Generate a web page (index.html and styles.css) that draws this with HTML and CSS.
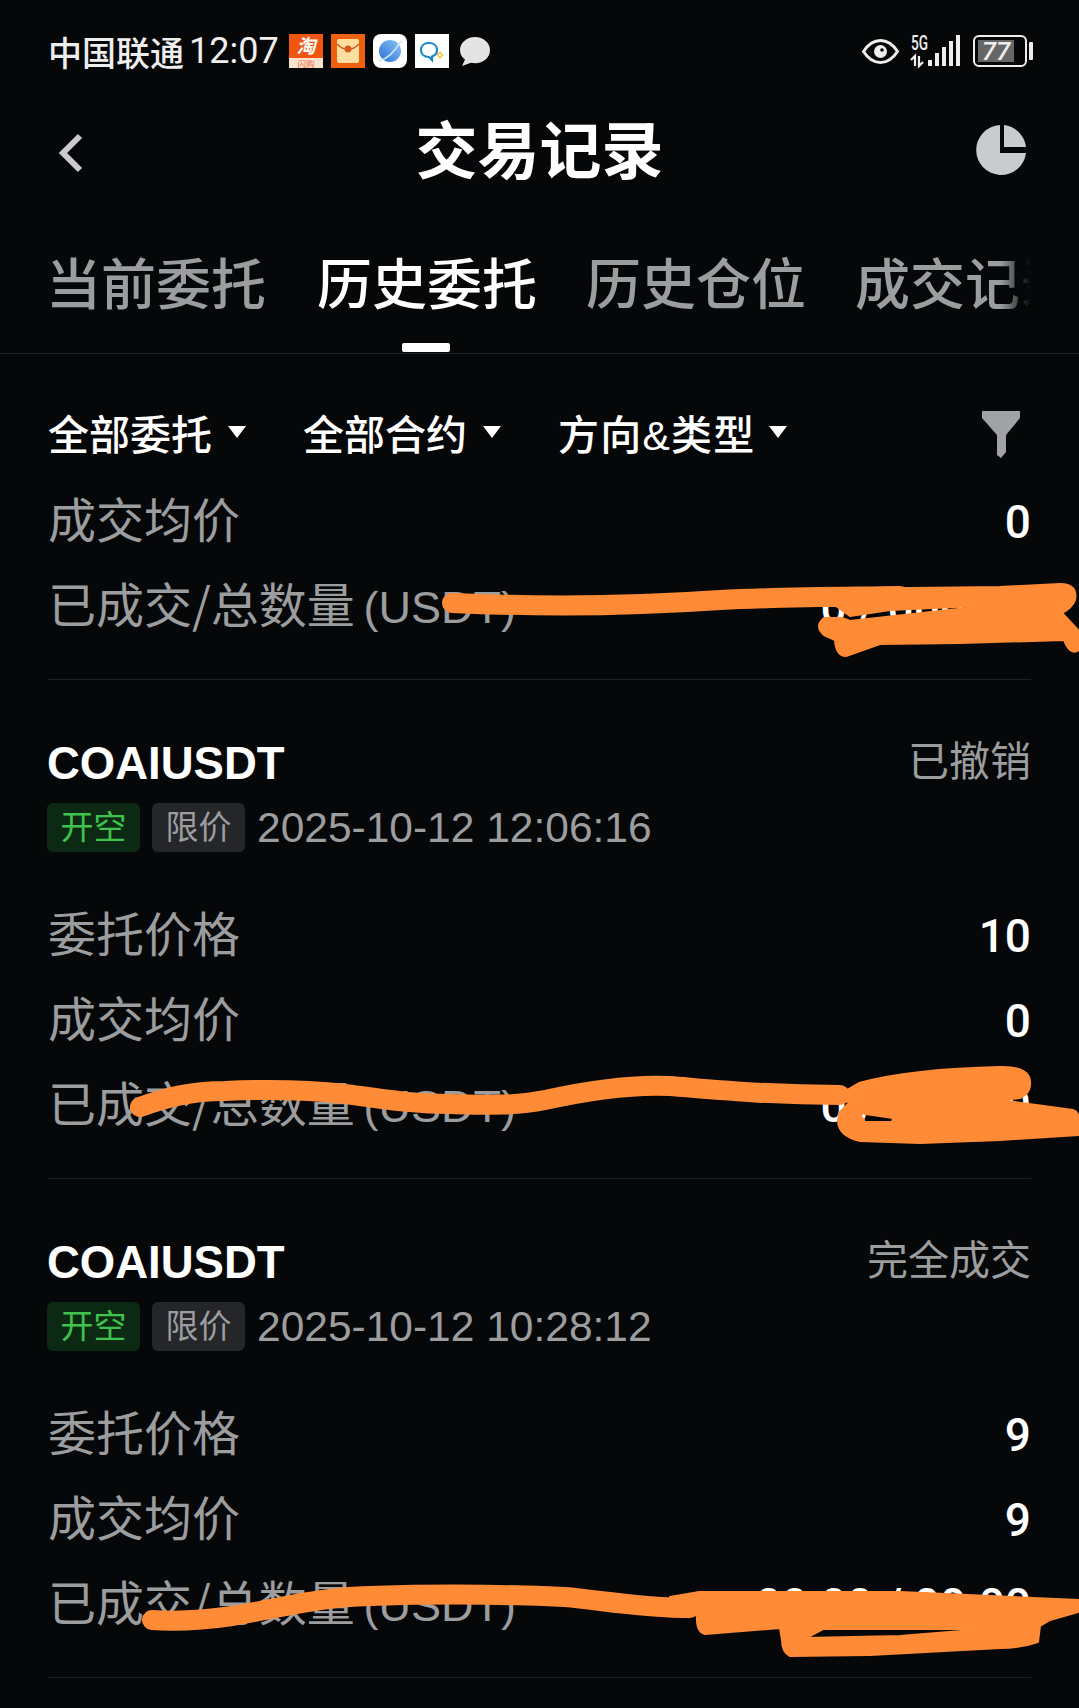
FILE: index.html
```html
<!DOCTYPE html>
<html>
<head>
    <title>交易记录</title>
    <meta charset="utf-8">
    <meta name="viewport" content="width=device-width, initial-scale=1.0">
    <link rel="stylesheet" href="styles.css">
</head>
<body>
    <div id="page">
        <!-- status bar -->
        <div class="statusbar">
            <div class="status-left">
                <span class="carrier">中国联通</span>
                <span class="clock">12:07</span>
                <svg class="app-icon" viewBox="0 0 34 34">
                    <rect width="34" height="34" fill="#f0560f"/>
                    <rect y="24" width="34" height="10" fill="#fbe2cf"/>
                    <text x="17" y="19" class="icon-tao">淘</text>
                    <text x="17" y="32.5" class="icon-shan">闪购</text>
                </svg>
                <svg class="app-icon" viewBox="0 0 34 34">
                    <rect width="34" height="34" fill="#ee620f"/>
                    <rect x="6" y="5" width="22" height="24" rx="2" fill="#ffdf9f"/>
                    <path d="M6 10 Q17 21 28 10" fill="none" stroke="#d9571b" stroke-width="1.500"/>
                    <circle cx="17" cy="15" r="3.500" fill="#d9571b"/>
                </svg>
                <svg class="app-icon" viewBox="0 0 34 34">
                    <defs>
                        <linearGradient id="globe" x1="0" y1="1" x2="1" y2="0">
                            <stop offset="0" stop-color="#2a6fd8"/>
                            <stop offset="1" stop-color="#8cc6f5"/>
                        </linearGradient>
                    </defs>
                    <rect width="34" height="34" rx="8" fill="#fff"/>
                    <circle cx="17" cy="17" r="11" fill="url(#globe)"/>
                    <path d="M6 27 Q18 24 28 7" fill="none" stroke="#cfe6fa" stroke-width="1.600"/>
                </svg>
                <svg class="app-icon" viewBox="0 0 34 34">
                    <rect width="34" height="34" fill="#fff"/>
                    <path d="M14 9 C9 9 6 12 6 16 C6 20 9 23 14 23 L17 26 V22.500 C20 21.500 22 19 22 16 C22 12 19 9 14 9 Z" fill="none" stroke="#1b86c4" stroke-width="2.200"/>
                    <path d="M25 17 L28.500 21 L25 25 L21.500 21 Z" fill="#f4c64a"/>
                    <path d="M25 19.500 L26.500 21 L25 22.500 L23.500 21 Z" fill="#fff"/>
                </svg>
                <svg class="bubble-icon" viewBox="0 0 31 31">
                    <path d="M16 1 C7.500 1 1 7 1 14 C1 18 3 21.500 6 23.500 L3 30 L12 26.800 C13.500 27.100 14.500 27.200 16 27.200 C24.500 27.200 31 21.500 31 14 C31 7 24.500 1 16 1 Z" fill="#e4e4e4"/>
                </svg>
            </div>
            <div class="status-right">
                <svg class="eye-icon" viewBox="0 0 37 25">
                    <path d="M1.500 12.500 C7 4 13 1.500 18.500 1.500 C24 1.500 30 4 35.500 12.500 C30 21 24 23.500 18.500 23.500 C13 23.500 7 21 1.500 12.500 Z" fill="none" stroke="#eee" stroke-width="3"/>
                    <circle cx="18.500" cy="12.500" r="6.500" fill="#eee"/>
                    <circle cx="20" cy="11" r="1.800" fill="#060708"/>
                </svg>
                <svg class="signal-icon" viewBox="0 0 52 32">
                    <text x="1" y="15" class="icon-5g" textLength="17" lengthAdjust="spacingAndGlyphs">5G</text>
                    <path d="M5 31 V21 L1 25 M9 21 V31 L13 27" fill="none" stroke="#eee" stroke-width="2.200"/>
                    <rect x="18" y="25" width="4" height="6" fill="#eee"/>
                    <rect x="25" y="18" width="4" height="13" fill="#eee"/>
                    <rect x="32" y="12" width="4" height="19" fill="#eee"/>
                    <rect x="39" y="6" width="4" height="25" fill="#eee"/>
                    <rect x="46" y="0" width="4" height="31" fill="#eee"/>
                </svg>
                <div class="battery">
                    <div class="battery-body">
                        <div class="battery-fill">77</div>
                    </div>
                    <div class="battery-nub"></div>
                </div>
            </div>
        </div>

        <!-- title -->
        <div class="titlebar">
            <svg class="back-icon" viewBox="0 0 24 40">
                <path d="M21 3 L4 20 L21 37" fill="none" stroke="#c9cacc" stroke-width="6"/>
            </svg>
            <div class="title">交易记录</div>
            <svg class="pie-icon" viewBox="0 0 50 50">
                <path d="M28 0 A25 25 0 0 1 50 22 H28 Z" fill="#c9ccce"/>
                <path d="M24 3 V28 H50 A25 25 0 1 1 24 0 Z" fill="#c9ccce"/>
            </svg>
        </div>

        <!-- tabs -->
        <div class="tabs-wrap">
            <div class="tabs">
                <div class="tab">当前委托</div>
                <div class="tab active">历史委托</div>
                <div class="tab">历史仓位</div>
                <div class="tab">成交记录</div>
            </div>
        </div>

        <!-- filters -->
        <div class="filters">
            <div class="filter">全部委托<span class="caret"></span></div>
            <div class="filter">全部合约<span class="caret"></span></div>
            <div class="filter filter-wide">方向&amp;类型<span class="caret"></span></div>
            <svg class="funnel-icon" viewBox="0 0 40 47">
                <path d="M1 0 H39 L39 7 L25 24 V41 L20 47 L16 44 V24 L1 7 Z" fill="#a0a2a5"/>
            </svg>
        </div>

        <!-- partial order, scrolled under the filters -->
        <div class="rows">
            <div class="row"><span class="label">成交均价</span><span class="value">0</span></div>
            <div class="row"><span class="label">已成交/总数量 <span class="latin">(USDT)</span></span><span class="value">0 / 000.00</span></div>
        </div>

        <div class="order">
            <div class="order-head">
                <div class="order-top">
                    <span class="symbol">COAIUSDT</span>
                    <span class="state">已撤销</span>
                </div>
                <div class="order-meta">
                    <span class="tag tag-short">开空</span>
                    <span class="tag">限价</span>
                    <span class="date">2025-10-12 12:06:16</span>
                </div>
            </div>
            <div class="rows">
                <div class="row"><span class="label">委托价格</span><span class="value">10</span></div>
                <div class="row"><span class="label">成交均价</span><span class="value">0</span></div>
                <div class="row"><span class="label">已成交/总数量 <span class="latin">(USDT)</span></span><span class="value">0 / 000.00</span></div>
            </div>
        </div>

        <div class="order">
            <div class="order-head">
                <div class="order-top">
                    <span class="symbol">COAIUSDT</span>
                    <span class="state">完全成交</span>
                </div>
                <div class="order-meta">
                    <span class="tag tag-short">开空</span>
                    <span class="tag">限价</span>
                    <span class="date">2025-10-12 10:28:12</span>
                </div>
            </div>
            <div class="rows">
                <div class="row"><span class="label">委托价格</span><span class="value">9</span></div>
                <div class="row"><span class="label">成交均价</span><span class="value">9</span></div>
                <div class="row"><span class="label">已成交/总数量 <span class="latin">(USDT)</span></span><span class="value">00.00 / 00.00</span></div>
            </div>
        </div>
        <div class="order-end"></div>

        <!-- hand drawn marks over the amounts -->
        <svg class="scribble" viewBox="0 0 1079 1708">
            <g class="scribble-line">
                <path d="M452 603 C520 606 620 607 720 600 C780 597 830 597 900 596"/>
                <path d="M140 1107 C165 1098 190 1091 225 1091 C270 1089 310 1090 345 1094 C390 1100 415 1104 450 1104 C490 1105 515 1106 545 1100 C590 1090 630 1084 670 1086 C720 1090 770 1095 840 1095"/>
                <path d="M152 1620 C180 1622 205 1620 232 1616 C280 1608 320 1597 370 1596 C430 1594 500 1594 565 1597 C600 1600 640 1608 690 1608"/>
            </g>
            <g class="scribble-fill">
                <path d="M826 589 L1000 587 L1060 584 Q1078 584 1075 600 Q1072 608 1062 613 L976 606 L890 610 L850 616 L836 606 L826 606 Z"/>
                <path d="M850 621 L976 607 L1062 613 L1078 630 L1079 650 Q1070 656 1064 640 L960 643 L880 644 L846 656 Q836 656 835 640 L824 635 Q814 626 824 618 L842 618 Z"/>
                <path d="M859 1083 C900 1072 950 1068 1000 1067 Q1032 1066 1030 1085 Q1030 1093 1020 1098 L1000 1100 L1073 1110 Q1079 1112 1079 1120 L1079 1135 L1000 1140 L920 1143 L860 1141 Q838 1136 838 1120 L840 1112 L850 1102 L830 1100 Z M859 1113 L893 1118 L892 1122 L865 1122 Z"/>
                <path d="M670 1597 L699 1592 L900 1592 L1079 1600 L1078 1612 L1050 1620 L1040 1626 L1038 1642 Q1020 1648 1000 1648 L870 1655 L790 1656 Q782 1652 782 1640 L780 1628 L705 1634 Q696 1632 697 1615 L670 1615 Z M806 1638 L823 1629 L986 1629 L900 1636 Z"/>
            </g>
        </svg>
    </div>
</body>
</html>
```

FILE: styles.css
```css
:root {
    --bg-color: #060708;
    --line-color: #1f2022;
    --muted-color: #9b9d9f;
    --cjk: "Noto Sans CJK SC", sans-serif;
}

html, body {
    margin: 0;
    padding: 0;
    background: var(--bg-color);
}

#page {
    position: relative;
    width: 1079px;
    height: 1708px;
    overflow: hidden;
    background: var(--bg-color);
    color: #fff;
    font-family: "Liberation Sans", var(--cjk);
}

/* status bar */
.statusbar {
    display: flex;
    justify-content: space-between;
    align-items: center;
    height: 102px;
    padding: 0 46px 0 48px;
    box-sizing: border-box;
}

.status-left,
.status-right {
    display: flex;
    align-items: center;
}

.carrier {
    font-family: var(--cjk);
    font-size: 34px;
    font-weight: 500;
    color: #eee;
}

.clock {
    margin: 0 10px 0 5px;
    font-family: Roboto, sans-serif;
    font-size: 36px;
    color: #eee;
}

.app-icon {
    width: 34px;
    height: 34px;
    margin-right: 8px;
    overflow: visible;
}

.bubble-icon {
    width: 31px;
    height: 31px;
    margin-left: 2px;
}

.icon-tao {
    font-family: var(--cjk);
    font-size: 19px;
    font-weight: 700;
    font-style: italic;
    fill: #fff;
    text-anchor: middle;
}

.icon-shan {
    font-family: var(--cjk);
    font-size: 8.500px;
    fill: #e2683a;
    text-anchor: middle;
}

.icon-5g {
    font-family: Roboto, sans-serif;
    font-size: 20px;
    font-weight: 500;
    fill: #eee;
}

.eye-icon {
    width: 37px;
    height: 25px;
    margin-right: 11px;
}

.signal-icon {
    width: 52px;
    height: 32px;
    margin-right: 11px;
    overflow: visible;
}

.battery {
    display: flex;
    align-items: center;
}

.battery-body {
    width: 54px;
    height: 32px;
    padding: 3px;
    box-sizing: border-box;
    border: 2px solid #eee;
    border-radius: 6px;
}

.battery-fill {
    width: 36px;
    height: 100%;
    background: #666;
    font-family: Roboto, sans-serif;
    font-size: 26px;
    font-weight: 500;
    font-style: italic;
    line-height: 22px;
    text-align: center;
    color: #eee;
}

.battery-nub {
    width: 4px;
    height: 18px;
    margin-left: 2px;
    background: #eee;
    border-radius: 1px;
}

/* title */
.titlebar {
    display: flex;
    justify-content: space-between;
    align-items: center;
    height: 92px;
    padding: 0 53px 0 59px;
    box-sizing: border-box;
}

.back-icon {
    width: 24px;
    height: 40px;
    margin-top: 10px;
}

.title {
    font-family: var(--cjk);
    font-size: 62px;
    font-weight: 700;
    line-height: 90px;
    margin-left: 20px;
    margin-bottom: 2px;
}

.pie-icon {
    width: 50px;
    height: 50px;
    margin-top: 4px;
}

/* tabs */
.tabs-wrap {
    height: 160px;
    padding-left: 46px;
    box-sizing: border-box;
    border-bottom: 1px solid var(--line-color);
}

.tabs {
    display: flex;
    gap: 49px;
    width: 985px;
    height: 159px;
    overflow: hidden;
    mask-image: linear-gradient(to right, #000 954px, transparent 985px);
}

.tab {
    position: relative;
    flex: none;
    height: 159px;
    padding-top: 16px;
    box-sizing: border-box;
    font-family: var(--cjk);
    font-size: 55px;
    font-weight: 500;
    line-height: 141px;
    color: var(--muted-color);
}

.tab:first-child {
    margin-right: 2px;
}

.tab.active {
    color: #fff;
}

.tab.active::after {
    content: "";
    position: absolute;
    left: 85px;
    bottom: 1px;
    width: 48px;
    height: 9px;
    background: #fff;
    border-radius: 2px;
}

/* filters */
.filters {
    display: flex;
    align-items: center;
    height: 124px;
    padding: 32px 58px 0 48px;
    box-sizing: border-box;
    gap: 57px;
}

.filter {
    display: flex;
    align-items: center;
    font-family: "Liberation Sans", var(--cjk);
    font-size: 41px;
    font-weight: 500;
}

.filter-wide {
    letter-spacing: 1.200px;
}

.filter-wide .caret {
    margin-left: 14px;
}

.caret {
    width: 0;
    height: 0;
    margin-left: 16px;
    border-left: 9px solid transparent;
    border-right: 9px solid transparent;
    border-top: 12px solid #fff;
}

.funnel-icon {
    width: 40px;
    height: 47px;
    margin-left: auto;
    margin-top: 4px;
}

/* order rows */
.rows {
    padding: 0 48px 31px;
}

.row {
    display: flex;
    justify-content: space-between;
    align-items: center;
    height: 85px;
}

.label {
    margin-bottom: 7px;
    font-family: var(--cjk);
    font-size: 48px;
    color: var(--muted-color);
}

.latin {
    margin-left: -2px;
    font-family: "Liberation Sans", sans-serif;
    font-size: 45px;
}

.value {
    margin-top: 3px;
    font-family: Roboto, sans-serif;
    font-size: 46px;
    font-weight: 500;
}

.order {
    margin: 0 48px;
    border-top: 1px solid var(--line-color);
}

.order .rows {
    padding: 0 0 31px;
}

.order-end {
    margin: 0 48px;
    border-top: 1px solid var(--line-color);
}

.order-head {
    height: 212px;
    padding-top: 58px;
    box-sizing: border-box;
}

.order-top {
    display: flex;
    justify-content: space-between;
    align-items: center;
    height: 52px;
}

.symbol {
    margin-left: -1px;
    font-size: 45.500px;
    font-weight: 700;
}

.state {
    margin-bottom: 12px;
    font-family: var(--cjk);
    font-size: 41px;
    color: var(--muted-color);
}

.order-meta {
    display: flex;
    align-items: center;
    margin-top: 12px;
    margin-left: -1px;
}

.tag {
    width: 93px;
    height: 49px;
    margin-right: 12px;
    background: #25262a;
    border-radius: 6px;
    font-family: var(--cjk);
    font-size: 33px;
    line-height: 45px;
    text-align: center;
    color: var(--muted-color);
}

.tag-short {
    background: #0c2a13;
    color: #40c24f;
}

.date {
    margin-top: 2px;
    font-size: 42.500px;
    color: var(--muted-color);
}

/* scribbles */
.scribble {
    position: absolute;
    top: 0;
    left: 0;
    width: 1079px;
    height: 1708px;
}

.scribble-line {
    fill: none;
    stroke: #ff8b36;
    stroke-width: 20;
    stroke-linecap: round;
}

.scribble-fill {
    fill: #ff8b36;
    fill-rule: evenodd;
    stroke: #ff8b36;
    stroke-width: 2;
    stroke-linejoin: round;
}
```
